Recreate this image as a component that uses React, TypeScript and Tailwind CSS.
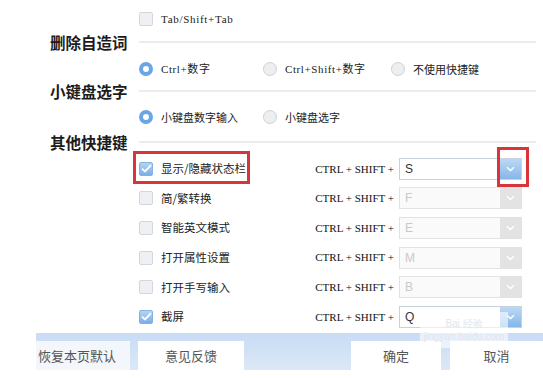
import React from "react";

const cjk = "font-['Noto_Sans_CJK_SC',sans-serif]";
const mono = "font-['Liberation_Serif','Noto_Sans_CJK_SC',serif]";

function Chevron({ color = "#ffffff" }: { color?: string }) {
  return (
    <svg width="9" height="6" viewBox="0 0 9 6">
      <path d="M1 1.2 L4.5 4.6 L8 1.2" fill="none" stroke={color} strokeWidth="1.4" />
    </svg>
  );
}

function CheckBox({ checked }: { checked?: boolean }) {
  if (checked) {
    return (
      <span className="w-[14px] h-[14px] rounded-[2px] bg-gradient-to-b from-[#b4d4f5] to-[#7aaee8] border border-[#82b2e6] flex items-center justify-center shrink-0">
        <svg width="11" height="9" viewBox="0 0 11 9">
          <path d="M1 4.6 L4 7.4 L10 1.2" fill="none" stroke="#fff" strokeWidth="1.8" />
        </svg>
      </span>
    );
  }
  return <span className="w-[14px] h-[14px] rounded-[2px] bg-[#eef0f3] border border-[#d3d7db] shrink-0" />;
}

function Radio({ on }: { on?: boolean }) {
  if (on) {
    return <span className="w-[14px] h-[14px] rounded-full border-[4px] border-[#6aa6e6] bg-white shrink-0" />;
  }
  return <span className="w-[14px] h-[14px] rounded-full border border-[#cfd2d6] bg-[#eceef0] shrink-0" />;
}

function Combo({ value, enabled }: { value: string; enabled?: boolean }) {
  return (
    <div
      className={
        "w-[123px] h-[22px] flex border " +
        (enabled ? "border-[#c8d2dc] bg-white" : "border-[#e2e2e2] bg-[#fafafa]")
      }
    >
      <span
        className={
          "flex-1 pl-[5px] text-[12px] leading-[20px] font-['Liberation_Sans',sans-serif] " +
          (enabled ? "text-[#333]" : "text-[#c9c9c9]")
        }
      >
        {value}
      </span>
      <span
        className={
          "w-[21px] h-full flex items-center justify-center " +
          (enabled ? "bg-gradient-to-b from-[#bcd8f4] to-[#86b6e8]" : "bg-[#e3e3e3]")
        }
      >
        <Chevron />
      </span>
    </div>
  );
}

function Heading({ text }: { text: string }) {
  return (
    <div className="flex items-center h-[16px]">
      <span className={"w-[89px] text-[15.5px] leading-[16px] font-bold text-[#1c1c1c] " + cjk}>{text}</span>
      <span className="flex-1 h-[2px] bg-[#ececec]" />
    </div>
  );
}

const shortcuts = [
  { label: "显示/隐藏状态栏", key: "S", on: true, mark: true },
  { label: "简/繁转换", key: "F", on: false },
  { label: "智能英文模式", key: "E", on: false },
  { label: "打开属性设置", key: "M", on: false },
  { label: "打开手写输入", key: "B", on: false },
  { label: "截屏", key: "Q", on: true },
];

export default function App() {
  return (
    <div className="w-[543px] h-[378px] bg-white flex flex-col relative overflow-hidden">
      <div className="pl-[50px] pr-[7px]">
        <div className="h-[34px] pt-[4px] pl-[89px] flex items-center gap-[8px]">
          <CheckBox />
          <span className={"text-[11px] tracking-[0.7px] text-[#222] " + mono}>Tab/Shift+Tab</span>
        </div>

        <Heading text="删除自造词" />
        <div className="h-[33px] pt-[5px] pl-[89px] flex items-center text-[11px] text-[#222]">
          <div className="w-[124px] flex items-center gap-[8px]">
            <Radio on />
            <span className={"tracking-[0.6px] " + mono}>Ctrl+数字</span>
          </div>
          <div className="w-[128px] flex items-center gap-[8px]">
            <Radio />
            <span className={"tracking-[0.6px] " + mono}>Ctrl+Shift+数字</span>
          </div>
          <div className="flex items-center gap-[8px]">
            <Radio />
            <span className={cjk}>不使用快捷键</span>
          </div>
        </div>

        <Heading text="小键盘选字" />
        <div className={"h-[35px] pt-[1px] pl-[89px] flex items-center text-[11px] text-[#222] " + cjk}>
          <div className="w-[124px] flex items-center gap-[8px]">
            <Radio on />
            <span>小键盘数字输入</span>
          </div>
          <div className="flex items-center gap-[8px]">
            <Radio />
            <span>小键盘选字</span>
          </div>
        </div>

        <Heading text="其他快捷键" />
        <div className="pt-[4px] pl-[89px] pr-[14px]">
          {shortcuts.map((s) => (
            <div key={s.label} className="h-[29.6px] flex items-center">
              <div className="relative flex items-center gap-[8px] flex-1">
                <CheckBox checked={s.on} />
                <span className={"text-[11.5px] text-[#222] " + cjk}>{s.label}</span>
                {s.mark && (
                  <span className="absolute left-[-6px] top-[-9px] w-[117px] h-[33px] border-[3px] border-[#d8353a]" />
                )}
              </div>
              <span className={"text-[11px] text-[#111] mr-[5px] whitespace-pre " + mono}>CTRL + SHIFT +</span>
              <div className="relative">
                <Combo value={s.key} enabled={s.key === "S" || s.key === "Q"} />
                {s.mark && (
                  <span className="absolute left-[98px] top-[-11px] w-[32px] h-[40px] border-[3px] border-[#d8353a]" />
                )}
              </div>
            </div>
          ))}
        </div>
      </div>

      <div className="mt-auto mb-[8px] ml-[36px] h-[37px] pt-[8px] flex bg-gradient-to-b from-[#c8dcf4] to-[#dce8f7]">
        <div className={"w-[94px] flex items-center pl-[2px] text-[13px] text-[#555] bg-[#f3f7fb] " + cjk}>恢复本页默认</div>
        <div className={"ml-[8px] w-[106px] flex items-center justify-center text-[13px] text-[#555] bg-white " + cjk}>意见反馈</div>
        <div className="flex-1" />
        <div className={"w-[90px] flex items-center justify-center text-[13px] text-[#555] bg-white " + cjk}>确定</div>
        <div className="w-[9px]" />
        <div className={"flex-1 max-w-[93px] flex items-center justify-center text-[13px] text-[#555] bg-white " + cjk}>取消</div>
      </div>

      <div className="absolute left-[420px] top-[312px] w-[88px] h-[36px] bg-white/60 flex flex-col items-center justify-center text-[10px] leading-[13px] text-[#dfe6ee] font-['Liberation_Sans',sans-serif]">
        <span>Bai 经验</span>
        <span>jingyan.baidu.com</span>
      </div>
    </div>
  );
}
